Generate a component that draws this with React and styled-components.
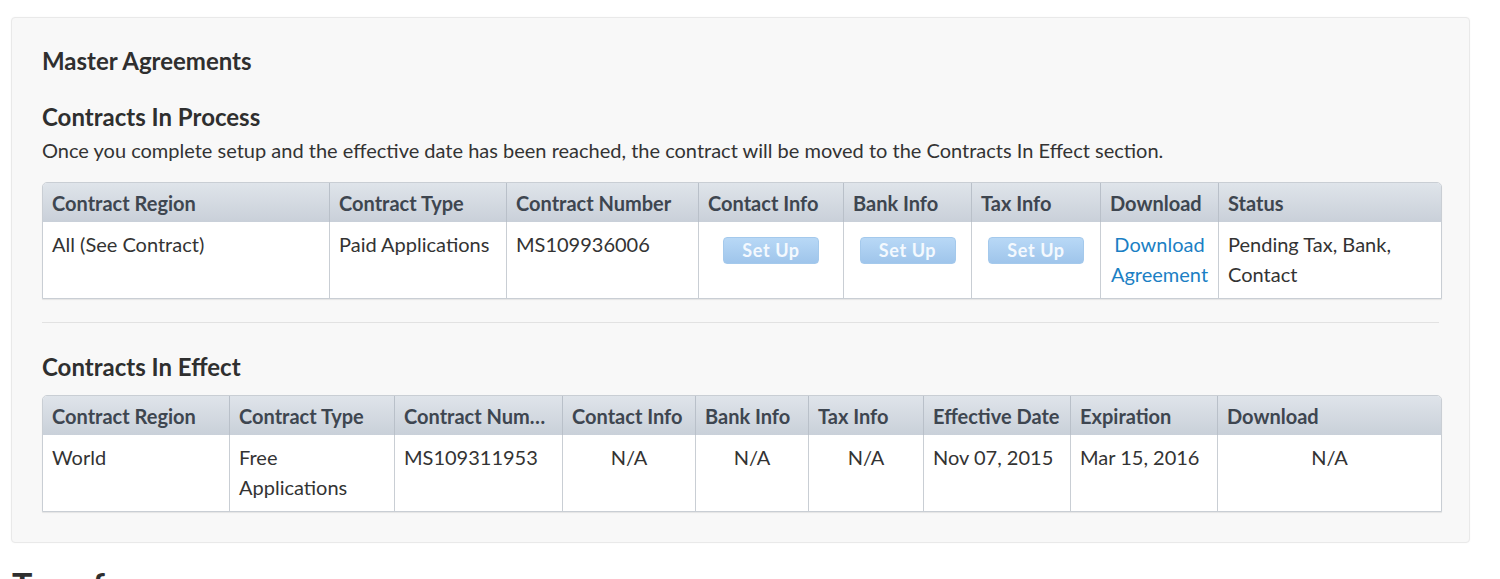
import React from 'react';
import styled, { createGlobalStyle } from 'styled-components';

const GlobalStyle = createGlobalStyle`
  html, body {
    margin: 0;
    padding: 0;
    background: #ffffff;
    font-family: Lato, "Liberation Sans", Arial, sans-serif;
    color: #333333;
  }
`;

const Page = styled.div`
  padding: 17px 30px 0 11px;
`;

const Panel = styled.section`
  background: #f8f8f8;
  border: 1px solid #e9e9e9;
  border-radius: 4px;
  padding: 28px 30px 30px 30px;
  box-shadow: 0 0 2px rgba(0, 0, 0, 0.04);
`;

const Title = styled.h2`
  margin: 0;
  font-size: 24px;
  line-height: 30px;
  font-weight: 700;
  color: #2f2f2f;
`;

const SubTitle = styled.h3`
  margin: ${p => p.$top || 26}px 0 0 0;
  font-size: 24px;
  line-height: 30px;
  font-weight: 700;
  color: #2f2f2f;
`;

const Desc = styled.p`
  margin: 5px 0 0 0;
  font-size: 20px;
  line-height: 26px;
  color: #333;
`;

const Rule = styled.hr`
  margin: 23px 0 0 0;
  border: 0;
  border-top: 1px solid #e2e2e2;
  height: 0;
`;

const Table = styled.table`
  width: 100%;
  margin-top: ${p => p.$top}px;
  table-layout: fixed;
  border-collapse: separate;
  border-spacing: 0;
  border: 1px solid #c9ced4;
  border-radius: 5px 5px 0 0;
  background: #ffffff;
  box-shadow: 0 1px 1px rgba(0, 0, 0, 0.08);
  overflow: hidden;
`;

const Th = styled.th`
  height: 39px;
  padding: 0 9px;
  text-align: left;
  font-size: 20px;
  font-weight: 700;
  color: #3e4650;
  background: linear-gradient(#dfe4ea, #c9d0d9);
  border-left: 1px solid #b9c0c9;
  white-space: nowrap;
  overflow: ${p => (p.$clip ? 'hidden' : 'visible')};
  text-overflow: ellipsis;
  &:first-child { border-left: 0; }
`;

const Td = styled.td`
  height: 69px;
  padding: 7px 9px 0 9px;
  vertical-align: top;
  text-align: ${p => (p.$center ? 'center' : 'left')};
  font-size: 20px;
  line-height: 30px;
  color: #333;
  border-left: 1px solid #c9ced4;
  &:first-child { border-left: 0; }
`;

const SetUp = styled.button`
  display: inline-block;
  margin-top: 8px;
  width: 96px;
  height: 27px;
  padding: 0;
  border: 1px solid #a4c9ec;
  border-radius: 4px;
  background: linear-gradient(#b8d8f6, #9fc5eb);
  color: #f4f9fe;
  font-family: inherit;
  font-size: 18px;
  font-weight: 700;
  letter-spacing: 0.6px;
  line-height: 25px;
  vertical-align: top;
`;

const DownloadLink = styled.a`
  color: #1b7fc4;
  text-decoration: none;
`;

const NextHeading = styled.h2`
  margin: 22px 0 0 0;
  padding-left: 1px;
  font-size: 34px;
  line-height: 40px;
  font-weight: 700;
  color: #2f2f2f;
`;

const processCols = [286, 177, 192, 145, 128, 129, 118, 223];
const effectCols = [186, 165, 168, 133, 113, 115, 147, 147, 224];

function App() {
  return (
    <Page>
      <GlobalStyle />
      <Panel>
        <Title>Master Agreements</Title>

        <SubTitle $top={26}>Contracts In Process</SubTitle>
        <Desc>
          Once you complete setup and the effective date has been reached, the contract will be moved to the Contracts In Effect section.
        </Desc>

        <Table $top={19}>
          <colgroup>
            {processCols.map((w, i) => <col key={i} style={{ width: w }} />)}
          </colgroup>
          <thead>
            <tr>
              <Th>Contract Region</Th>
              <Th>Contract Type</Th>
              <Th>Contract Number</Th>
              <Th>Contact Info</Th>
              <Th>Bank Info</Th>
              <Th>Tax Info</Th>
              <Th>Download</Th>
              <Th>Status</Th>
            </tr>
          </thead>
          <tbody>
            <tr>
              <Td>All (See Contract)</Td>
              <Td>Paid Applications</Td>
              <Td>MS109936006</Td>
              <Td $center><SetUp>Set Up</SetUp></Td>
              <Td $center><SetUp>Set Up</SetUp></Td>
              <Td $center><SetUp>Set Up</SetUp></Td>
              <Td $center><DownloadLink href="#">Download Agreement</DownloadLink></Td>
              <Td>Pending Tax, Bank, Contact</Td>
            </tr>
          </tbody>
        </Table>

        <Rule />

        <SubTitle $top={29}>Contracts In Effect</SubTitle>

        <Table $top={13}>
          <colgroup>
            {effectCols.map((w, i) => <col key={i} style={{ width: w }} />)}
          </colgroup>
          <thead>
            <tr>
              <Th>Contract Region</Th>
              <Th>Contract Type</Th>
              <Th $clip>Contract Number</Th>
              <Th>Contact Info</Th>
              <Th>Bank Info</Th>
              <Th>Tax Info</Th>
              <Th>Effective Date</Th>
              <Th>Expiration</Th>
              <Th>Download</Th>
            </tr>
          </thead>
          <tbody>
            <tr>
              <Td>World</Td>
              <Td>Free Applications</Td>
              <Td>MS109311953</Td>
              <Td $center>N/A</Td>
              <Td $center>N/A</Td>
              <Td $center>N/A</Td>
              <Td>Nov 07, 2015</Td>
              <Td>Mar 15, 2016</Td>
              <Td $center>N/A</Td>
            </tr>
          </tbody>
        </Table>
      </Panel>
      <NextHeading>Transfer</NextHeading>
    </Page>
  );
}

export default App;
